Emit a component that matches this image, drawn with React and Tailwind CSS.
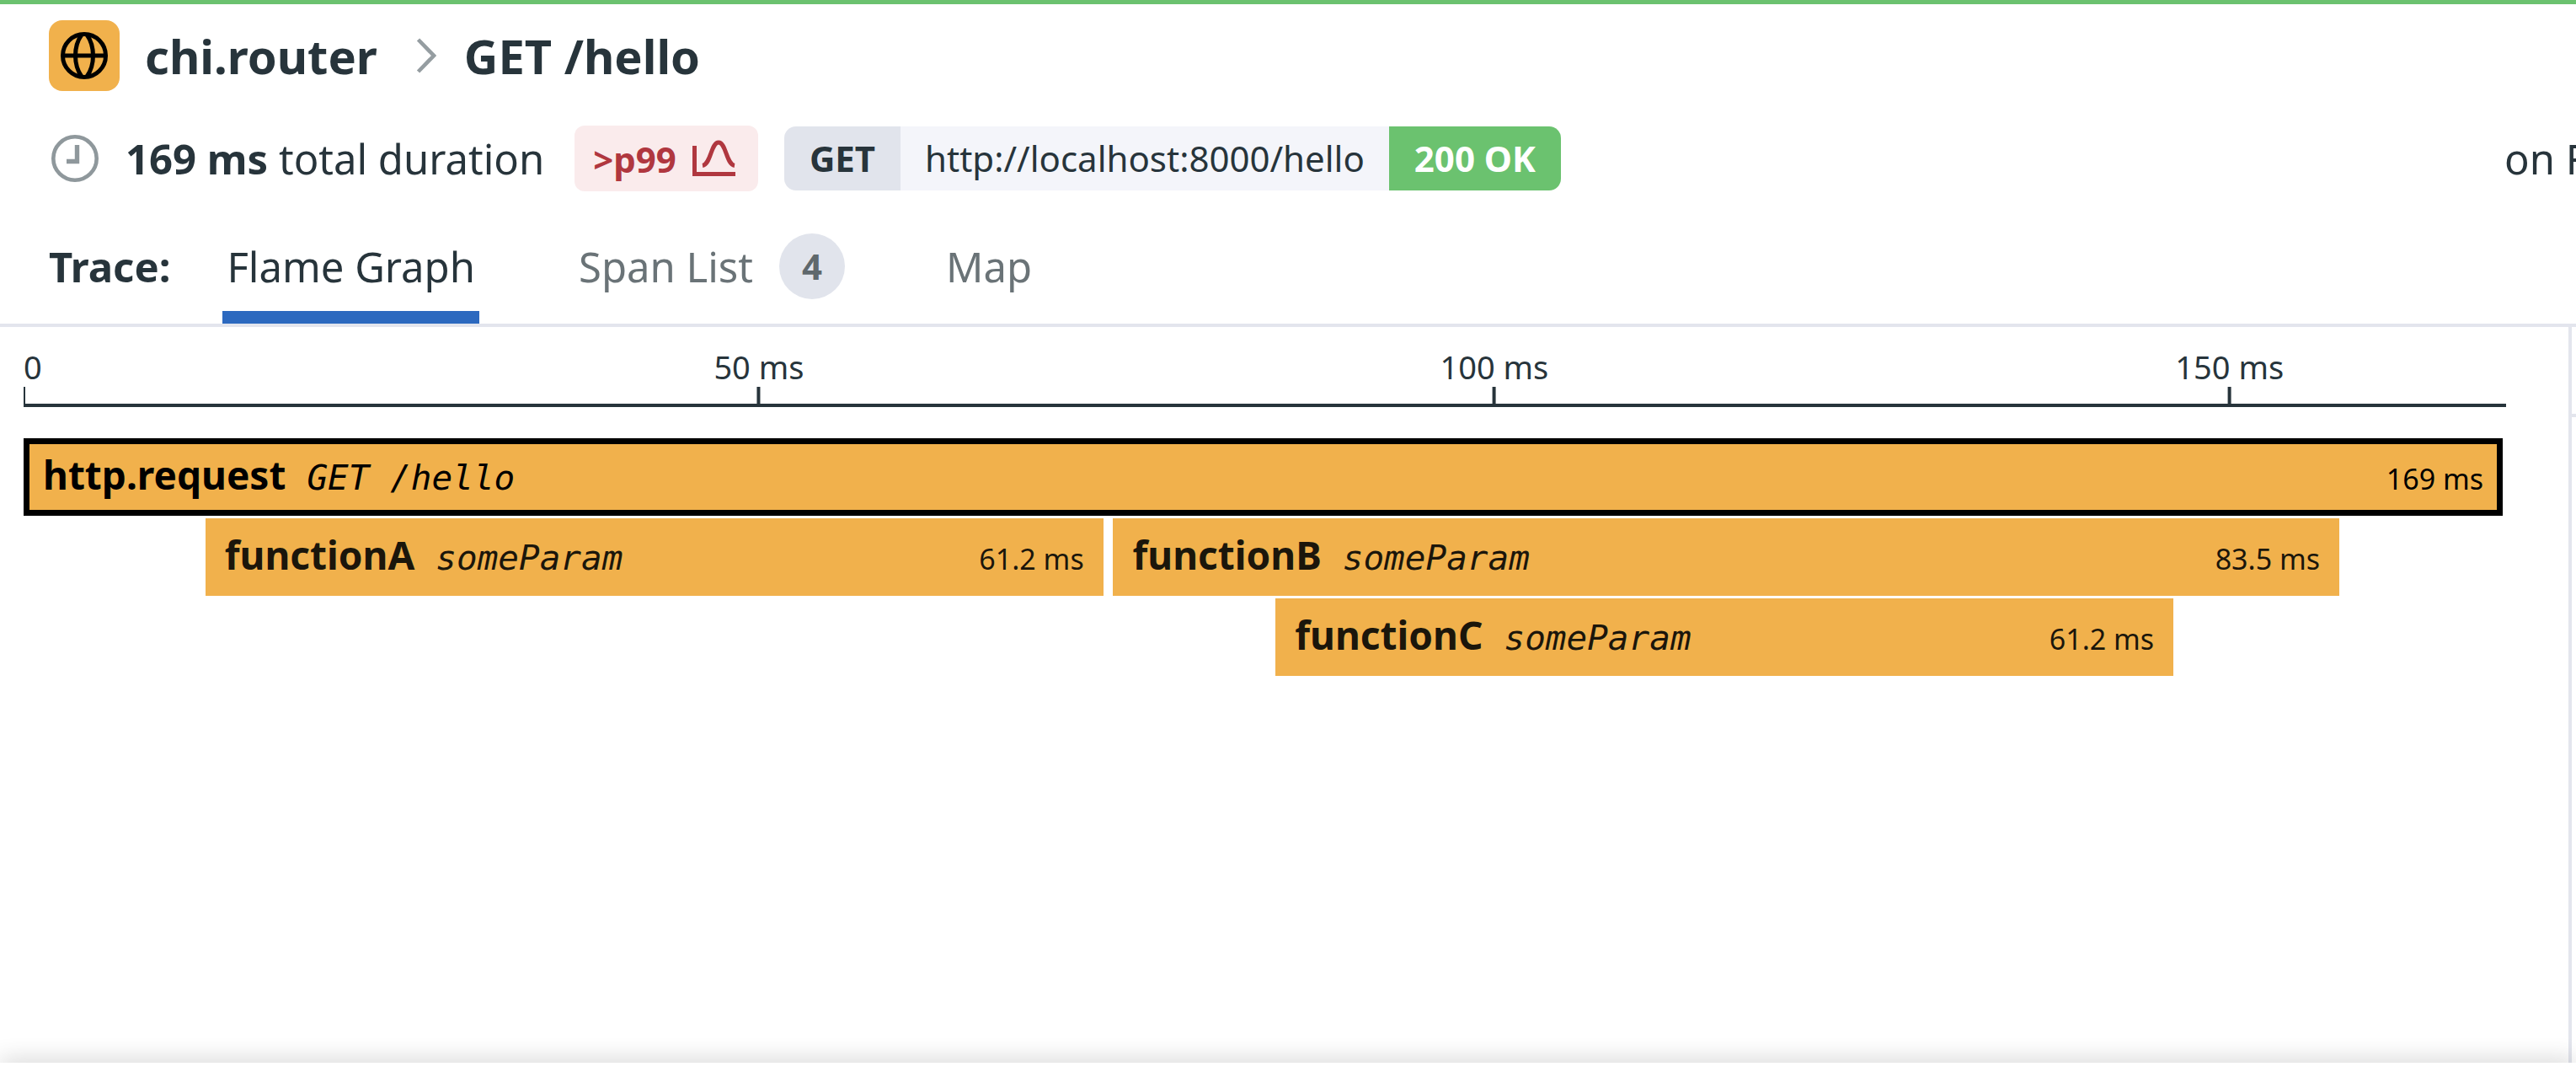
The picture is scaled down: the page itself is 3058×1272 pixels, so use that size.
import React from "react";

const TRACE_MS = 168.8;

const ticks = [
  { at: 0, label: "0" },
  { at: 50, label: "50 ms" },
  { at: 100, label: "100 ms" },
  { at: 150, label: "150 ms" },
];

const rows = [
  [{ name: "http.request", resource: "GET /hello", start: 0, width: 100, duration: "169 ms", selected: true }],
  [
    { name: "functionA", resource: "someParam", start: 7.33, width: 36.22, duration: "61.2 ms" },
    { name: "functionB", resource: "someParam", start: 43.95, width: 49.46, duration: "83.5 ms" },
  ],
  [{ name: "functionC", resource: "someParam", start: 50.5, width: 36.22, duration: "61.2 ms" }],
];

function GlobeIcon() {
  return (
    <svg viewBox="0 0 60 60" className="size-[60px]" fill="none" stroke="currentColor" strokeWidth="5" aria-hidden="true">
      <circle cx="30" cy="30" r="25.5" />
      <path d="M4 30h52" />
      <path d="M27 5C17 19 17 41 27 55M33 5c10 14 10 36 0 50" />
    </svg>
  );
}

function ClockIcon() {
  return (
    <svg viewBox="0 0 60 60" className="size-[60px] text-[#8f989c]" fill="none" stroke="currentColor" aria-hidden="true">
      <circle cx="30" cy="30" r="25.7" strokeWidth="4.6" />
      <path d="M32.5 14v19.5H20" strokeWidth="5.4" />
    </svg>
  );
}

function DistributionIcon() {
  return (
    <svg viewBox="0 0 51 44" className="h-[44px] w-[51px]" fill="none" stroke="currentColor" strokeWidth="5" aria-hidden="true">
      <path d="M2.5 7v33.5H51" />
      <path d="M12 30.5C22 29 22 3 31 3S40 29 50 30.5" />
    </svg>
  );
}

function Header() {
  return (
    <header className="border-t-[5px] border-[#6bc26f]">
      <div className="flex items-center pt-[19px] pl-[58px]">
        <span className="flex size-[84px] items-center justify-center rounded-2xl bg-[#f1b14c] text-black">
          <GlobeIcon />
        </span>
        <h1 className="flex items-center pl-[30px] text-[56px] leading-[84px] font-bold whitespace-nowrap">
          <span>chi.router</span>
          <svg viewBox="0 0 24 42" className="mr-[33px] ml-[46px] h-[42px] w-[24px] text-[#959da1]" fill="none" stroke="currentColor" strokeWidth="4.6" aria-hidden="true">
            <path d="M2.5 2l18.5 19L2.5 40" />
          </svg>
          <span>GET /hello</span>
        </h1>
      </div>
      <div className="flex items-center justify-between pt-[41px] pl-[59px]">
        <div className="flex items-center">
          <ClockIcon />
          <p className="pl-[30px] text-[49px] leading-[78px] whitespace-nowrap">
            <strong className="font-bold">169 ms</strong> total duration
          </p>
          <button type="button" className="ml-9 flex h-[78px] items-center gap-[19px] rounded-xl bg-[#faebec] pr-[27px] pl-[22px] text-[42px] font-bold text-[#b0373f]">
            &gt;p99
            <DistributionIcon />
          </button>
          <div className="ml-[31px] flex h-[76px] overflow-hidden rounded-[14px] text-[42px] leading-[76px] whitespace-nowrap">
            <span className="bg-[#e1e4ec] px-[30px] font-bold">GET</span>
            <a href="#url" className="bg-[#f4f5fa] px-[29px]">http://localhost:8000/hello</a>
            <span className="bg-[#6bc26f] px-[30px] font-bold text-white">200 OK</span>
          </div>
        </div>
        <p className="w-[85px] overflow-hidden text-[49px] leading-[78px] whitespace-nowrap">on F</p>
      </div>
    </header>
  );
}

function Tabs() {
  return (
    <nav className="flex border-b-4 border-[#e3e5ed] pt-[36px] pl-[58px] text-[49px] whitespace-nowrap">
      <span className="pr-[62px] leading-[106px] font-bold">Trace:</span>
      <button type="button" className="border-b-[15px] border-[#2c69bf] px-[5px] leading-[106px]">Flame Graph</button>
      <button type="button" className="ml-[118px] flex items-center pb-[15px] leading-[106px] text-[#6a7377]">
        Span List
        <span className="ml-[31px] flex size-[78px] items-center justify-center rounded-full bg-[#e1e4ec] text-[42px] font-bold text-[#5f686c]">4</span>
      </button>
      <button type="button" className="ml-[120px] pb-[15px] leading-[106px] text-[#6a7377]">Map</button>
    </nav>
  );
}

function TimeAxis() {
  return (
    <div className="mr-[74px] ml-[28px] border-b-4 border-[#27343b] pt-[24px]">
      <div className="relative h-[67px] text-[38px] leading-[46px]">
        {ticks.map((tick) => (
          <div
            key={tick.at}
            className={tick.at === 0 ? "absolute flex h-full flex-col justify-between" : "absolute flex h-full -translate-x-1/2 flex-col items-center justify-between"}
            style={{ left: `${(tick.at / TRACE_MS) * 100}%` }}
          >
            <span className="whitespace-nowrap">{tick.label}</span>
            <span className={tick.at === 0 ? "h-[20px] w-[2px] bg-[#27343b]" : "h-[20px] w-1 bg-[#27343b]"} />
          </div>
        ))}
      </div>
    </div>
  );
}

function Span({ span, offset }) {
  return (
    <button
      type="button"
      className={
        span.selected
          ? "flex h-[92px] items-center border-[7px] border-black bg-[#f1b14c] px-4 pb-[2px] text-black"
          : "flex h-[92px] items-center bg-[#f1b14c] px-[23px] pb-[2px] text-[#1b160b]"
      }
      style={{ width: `${span.width}%`, marginLeft: `${offset}%` }}
    >
      <span className="flex w-full items-baseline leading-[60px] whitespace-nowrap">
        <span className="text-[46px] font-bold">{span.name}</span>
        <span className="ml-[25px] font-['DejaVu_Sans_Mono',monospace] text-[41px] italic">{span.resource}</span>
        <span className="ml-auto text-[34px]">{span.duration}</span>
      </span>
    </button>
  );
}

function FlameGraph() {
  return (
    <div className="mr-[78px] ml-[28px] flex flex-col gap-[3px] pt-[37px]">
      {rows.map((row, i) => (
        <div key={i} className="flex">
          {row.map((span, j) => {
            const previousEnd = j > 0 ? row[j - 1].start + row[j - 1].width : 0;
            return <Span key={span.name} span={span} offset={span.start - previousEnd} />;
          })}
        </div>
      ))}
    </div>
  );
}

export default function App() {
  return (
    <div className="flex min-h-screen flex-col overflow-hidden bg-white font-['Noto_Sans',sans-serif] text-[#27343b]">
      <Header />
      <Tabs />
      <main className="flex flex-1">
        <section className="min-w-0 flex-1">
          <TimeAxis />
          <FlameGraph />
        </section>
        <aside className="w-[9px] border-l-4 border-[#e3e5ed]">
          <div className="h-[107px] border-b-4 border-[#e3e5ed]" />
        </aside>
      </main>
      <footer className="h-[11px] bg-white shadow-[0_0_28px_rgba(0,0,0,0.3)]" />
    </div>
  );
}
